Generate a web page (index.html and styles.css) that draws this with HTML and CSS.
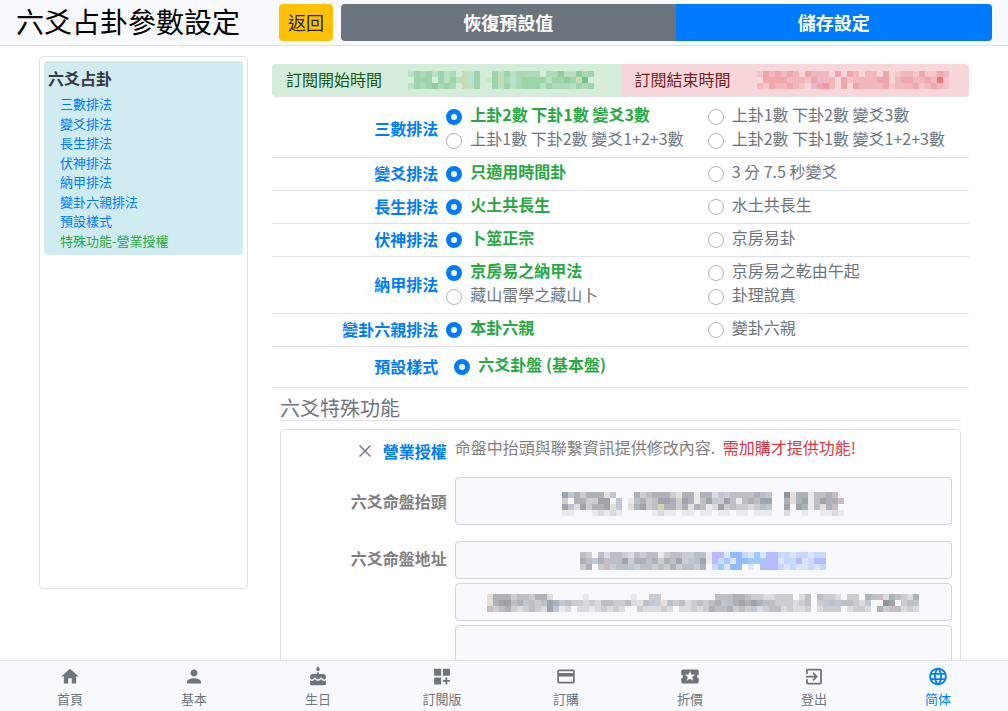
FILE: index.html
```html
<!DOCTYPE html>
<html lang="zh-Hant">
<head>
<meta charset="utf-8">
<meta name="viewport" content="width=device-width, initial-scale=1">
<title>六爻占卦參數設定</title>
<link rel="stylesheet" href="styles.css">
</head>
<body>
<header class="topbar">
  <h1 class="topbar-title">六爻占卦參數設定</h1>
  <button type="button" class="btn btn-back">返回</button>
  <div class="btn-group">
    <button type="button" class="btn btn-reset">恢復預設值</button>
    <button type="button" class="btn btn-save">儲存設定</button>
  </div>
</header>

<div class="page">
  <aside class="side">
    <nav class="side-nav" aria-label="六爻占卦">
      <h2 class="side-title">六爻占卦</h2>
      <a class="side-link" href="#r1">三數排法</a>
      <a class="side-link" href="#r2">變爻排法</a>
      <a class="side-link" href="#r3">長生排法</a>
      <a class="side-link" href="#r4">伏神排法</a>
      <a class="side-link" href="#r5">納甲排法</a>
      <a class="side-link" href="#r6">變卦六親排法</a>
      <a class="side-link" href="#r7">預設樣式</a>
      <a class="side-link side-link-green" href="#special">特殊功能-營業授權</a>
    </nav>
  </aside>

  <main class="main">
    <div class="period">
      <div class="period-cell period-start"><span>訂閱開始時間</span><svg class="mosaic" data-mosaic="start"></svg></div>
      <div class="period-cell period-end"><span>訂閱結束時間</span><svg class="mosaic" data-mosaic="end"></svg></div>
    </div>

    <div class="row row-first" id="r1" role="radiogroup" aria-labelledby="l1">
      <span class="row-label" id="l1">三數排法</span>
      <div class="options">
        <label class="option"><input type="radio" name="g1" checked><span>上卦2數 下卦1數 變爻3數</span></label>
        <label class="option"><input type="radio" name="g1"><span>上卦1數 下卦2數 變爻1+2+3數</span></label>
      </div>
      <div class="options">
        <label class="option"><input type="radio" name="g1"><span>上卦1數 下卦2數 變爻3數</span></label>
        <label class="option"><input type="radio" name="g1"><span>上卦2數 下卦1數 變爻1+2+3數</span></label>
      </div>
    </div>
    <div class="row" id="r2" role="radiogroup" aria-labelledby="l2">
      <span class="row-label" id="l2">變爻排法</span>
      <div class="options"><label class="option"><input type="radio" name="g2" checked><span>只適用時間卦</span></label></div>
      <div class="options"><label class="option"><input type="radio" name="g2"><span>3 分 7.5 秒變爻</span></label></div>
    </div>
    <div class="row" id="r3" role="radiogroup" aria-labelledby="l3">
      <span class="row-label" id="l3">長生排法</span>
      <div class="options"><label class="option"><input type="radio" name="g3" checked><span>火土共長生</span></label></div>
      <div class="options"><label class="option"><input type="radio" name="g3"><span>水土共長生</span></label></div>
    </div>
    <div class="row" id="r4" role="radiogroup" aria-labelledby="l4">
      <span class="row-label" id="l4">伏神排法</span>
      <div class="options"><label class="option"><input type="radio" name="g4" checked><span>卜筮正宗</span></label></div>
      <div class="options"><label class="option"><input type="radio" name="g4"><span>京房易卦</span></label></div>
    </div>
    <div class="row" id="r5" role="radiogroup" aria-labelledby="l5">
      <span class="row-label" id="l5">納甲排法</span>
      <div class="options">
        <label class="option"><input type="radio" name="g5" checked><span>京房易之納甲法</span></label>
        <label class="option"><input type="radio" name="g5"><span>藏山雷學之藏山卜</span></label>
      </div>
      <div class="options">
        <label class="option"><input type="radio" name="g5"><span>京房易之乾由午起</span></label>
        <label class="option"><input type="radio" name="g5"><span>卦理說真</span></label>
      </div>
    </div>
    <div class="row" id="r6" role="radiogroup" aria-labelledby="l6">
      <span class="row-label" id="l6">變卦六親排法</span>
      <div class="options"><label class="option"><input type="radio" name="g6" checked><span>本卦六親</span></label></div>
      <div class="options"><label class="option"><input type="radio" name="g6"><span>變卦六親</span></label></div>
    </div>
    <div class="row row-style" id="r7" role="radiogroup" aria-labelledby="l7">
      <span class="row-label" id="l7">預設樣式</span>
      <div class="options"><label class="option"><input type="radio" name="g7" checked><span>六爻卦盤 (基本盤)</span></label></div>
    </div>

    <section class="special" id="special">
      <h2 class="special-title">六爻特殊功能</h2>
      <div class="card">
        <div class="card-row card-row-license">
          <div class="license-label">
            <svg class="cross" viewBox="0 0 16 16" aria-hidden="true"><path d="M2.500 2.500 13.500 13.500M13.500 2.500 2.500 13.500"/></svg>
            <strong>營業授權</strong>
          </div>
          <p class="license-note">命盤中抬頭與聯繫資訊提供修改內容. <span class="warn">需加購才提供功能!</span></p>
        </div>
        <div class="card-row card-row-head">
          <span class="field-label">六爻命盤抬頭</span>
          <div class="field field-tall"><svg class="mosaic" data-mosaic="head"></svg></div>
        </div>
        <div class="card-row">
          <span class="field-label field-label-top">六爻命盤地址</span>
          <div class="field-stack">
            <div class="field"><svg class="mosaic" data-mosaic="address"></svg></div>
            <div class="field"><svg class="mosaic" data-mosaic="contact"></svg></div>
            <div class="field"></div>
          </div>
        </div>
      </div>
    </section>
  </main>
</div>

<nav class="tabbar" aria-label="主選單">
  <a class="tab" href="#home"><svg viewBox="0 0 24 24" aria-hidden="true"><path d="M10 20v-6h4v6h5v-8h3L12 3 2 12h3v8z"/></svg><span>首頁</span></a>
  <a class="tab" href="#basic"><svg viewBox="0 0 24 24" aria-hidden="true"><path d="M12 12c2.210 0 4-1.790 4-4s-1.790-4-4-4-4 1.790-4 4 1.790 4 4 4zm0 2c-2.670 0-8 1.340-8 4v2h16v-2c0-2.660-5.330-4-8-4z"/></svg><span>基本</span></a>
  <a class="tab" href="#birthday"><svg viewBox="0 0 24 24" aria-hidden="true"><path d="M12 6c1.110 0 2-.9 2-2 0-.38-.1-.73-.29-1.030L12 0l-1.710 2.970c-.19.3-.29.65-.29 1.030 0 1.100.9 2 2 2zm4.600 9.990l-1.070-1.070-1.080 1.070c-1.300 1.300-3.580 1.310-4.890 0l-1.070-1.070-1.090 1.070C6.750 16.640 5.880 17 4.960 17c-.73 0-1.400-.23-1.960-.61V21c0 .55.45 1 1 1h16c.55 0 1-.45 1-1v-4.610c-.56.38-1.230.61-1.960.61-.92 0-1.790-.36-2.440-1.010zM18 9h-5V7h-2v2H6c-1.660 0-3 1.340-3 3v1.540c0 1.080.88 1.960 1.960 1.960.52 0 1.020-.2 1.380-.57l2.140-2.130 2.130 2.130c.74.74 2.030.74 2.770 0l2.140-2.130 2.130 2.130c.37.37.86.57 1.380.57 1.080 0 1.960-.88 1.960-1.960V12C21 10.340 19.660 9 18 9z"/></svg><span>生日</span></a>
  <a class="tab" href="#subscription"><svg viewBox="0 0 24 24" aria-hidden="true"><path d="M3 3h8v8H3zm10 0h8v8h-8zM3 13h8v8H3zm15 0h-2v3h-3v2h3v3h2v-3h3v-2h-3z"/></svg><span>訂閱版</span></a>
  <a class="tab" href="#order"><svg viewBox="0 0 24 24" aria-hidden="true"><path d="M20 4H4c-1.110 0-1.990.89-1.990 2L2 18c0 1.110.89 2 2 2h16c1.110 0 2-.89 2-2V6c0-1.110-.89-2-2-2zm0 14H4v-6h16v6zm0-10H4V6h16v2z"/></svg><span>訂購</span></a>
  <a class="tab" href="#discount"><svg viewBox="0 0 24 24" aria-hidden="true"><path d="M20 12c0-1.100.9-2 2-2V6c0-1.100-.9-2-2-2H4c-1.100 0-1.990.9-1.990 2v4c1.100 0 1.990.9 1.990 2s-.89 2-2 2v4c0 1.100.9 2 2 2h16c1.100 0 2-.9 2-2v-4c-1.100 0-2-.9-2-2zm-4.420 4.800L12 14.500l-3.580 2.300 1.080-4.120-3.290-2.690 4.240-.25L12 5.800l1.540 3.950 4.240.25-3.290 2.690 1.090 4.110z"/></svg><span>折價</span></a>
  <a class="tab" href="#logout"><svg viewBox="0 0 24 24" aria-hidden="true"><path d="M10.090 15.590L11.500 17l5-5-5-5-1.410 1.410L12.670 11H3v2h9.670l-2.580 2.590zM19 3H5c-1.110 0-2 .9-2 2v4h2V5h14v14H5v-4H3v4c0 1.100.89 2 2 2h14c1.100 0 2-.9 2-2V5c0-1.100-.9-2-2-2z"/></svg><span>登出</span></a>
  <a class="tab tab-active" href="#lang" lang="zh-Hans"><svg viewBox="0 0 24 24" aria-hidden="true"><path d="M11.990 2C6.470 2 2 6.480 2 12s4.470 10 9.990 10C17.520 22 22 17.520 22 12S17.520 2 11.990 2zm6.930 6h-2.950c-.32-1.250-.78-2.450-1.380-3.560 1.840.63 3.370 1.910 4.330 3.560zM12 4.040c.83 1.200 1.480 2.530 1.910 3.960h-3.820c.43-1.430 1.080-2.760 1.910-3.960zM4.260 14C4.100 13.360 4 12.690 4 12s.1-1.360.26-2h3.380c-.08.66-.14 1.320-.14 2 0 .68.06 1.340.14 2H4.260zm.82 2h2.950c.32 1.250.78 2.450 1.380 3.560-1.840-.63-3.370-1.900-4.330-3.560zm2.950-8H5.080c.96-1.660 2.490-2.930 4.330-3.560C8.810 5.550 8.350 6.750 8.030 8zM12 19.960c-.83-1.200-1.480-2.530-1.910-3.960h3.820c-.43 1.430-1.080 2.760-1.910 3.960zM14.340 14H9.660c-.09-.66-.16-1.320-.16-2 0-.68.07-1.350.16-2h4.680c.09.65.16 1.320.16 2 0 .68-.07 1.340-.16 2zm.25 5.560c.6-1.110 1.060-2.310 1.380-3.560h2.950c-.96 1.650-2.490 2.930-4.330 3.560zM16.360 14c.08-.66.14-1.320.14-2 0-.68-.06-1.340-.14-2h3.380c.16.64.26 1.310.26 2s-.1 1.360-.26 2h-3.380z"/></svg><span>简体</span></a>
</nav>
<script src="mosaic.js"></script>
</body>
</html>
```
FILE: styles.css
```css
* { box-sizing: border-box; }

body {
  margin: 0;
  background: #fff;
  color: #212529;
  font-family: "Noto Sans CJK TC", "Noto Sans", sans-serif;
  font-size: 16px;
  line-height: 24px;
  overflow: hidden;
}

.topbar {
  position: fixed;
  inset: 0 0 auto;
  z-index: 2;
  display: flex;
  align-items: center;
  height: 46px;
  padding: 0 16px;
  background: #f8f9fa;
  border-bottom: 1px solid #dee2e6;
}
.topbar-title {
  margin: 0 39px 0 0;
  padding-bottom: 4px;
  color: #000;
  font-size: 28px;
  font-weight: 400;
  line-height: 40px;
  white-space: nowrap;
}
.btn {
  height: 37px;
  padding: 0 9px 2px;
  border: 0;
  border-radius: 4px;
  font-family: inherit;
  font-size: 18px;
  line-height: 24px;
  cursor: pointer;
}
.btn-back { margin-right: 8px; background: #ffc107; color: #212529; }
.btn-group { display: flex; flex: 1; }
.btn-reset, .btn-save { flex: 1 1 auto; color: #fff; font-weight: 700; }
.btn-reset { background: #6c757d; border-radius: 4px 0 0 4px; }
.btn-save { background: #007bff; border-radius: 0 4px 4px 0; }

.page {
  display: flex;
  align-items: flex-start;
  gap: 24px;
  max-width: 960px;
  margin: 0 auto;
  padding: 56px 15px 60px;
}

.side {
  flex: 0 0 209px;
  height: 75vh;
  padding: 4px;
  border: 1px solid #dee2e6;
  border-radius: 4px;
}
.side-nav {
  display: flex;
  flex-direction: column;
  padding: 5px 4px;
  background: #d1ecf1;
  border-radius: 4px;
}
.side-title {
  margin: 0 0 4px;
  color: #343a40;
  font-size: 16px;
  font-weight: 700;
  line-height: 24px;
}
.side-link {
  padding-left: 12px;
  color: #007bff;
  font-size: 13px;
  line-height: 1.5;
  text-decoration: none;
}
.side-link-green { color: #28a745; }

.main { flex: 1; min-width: 0; padding-top: 8px; }

.period {
  display: flex;
  border-bottom: 1px solid #dee2e6;
  border-radius: 4px;
  overflow: hidden;
}
.period-cell {
  display: flex;
  flex: 1 1 0;
  align-items: center;
  gap: 26px;
  height: 32px;
  padding-left: 14px;
}
.period-cell span { padding-bottom: 2px; }
.period-start { background: #d4edda; color: #155724; }
.period-end { background: #f8d7da; color: #721c24; }

.mosaic { display: block; flex: none; shape-rendering: crispEdges; }

.row {
  display: grid;
  grid-template-columns: 25% 37.5% 37.5%;
  align-items: center;
  padding: 4px 0;
  border-bottom: 1px solid #dee2e6;
}
.row-first { padding-top: 8px; }
.row-style { padding: 8px 0; }
.row-style .options { padding-left: 8px; }
.row-label {
  padding: 0 8px 2px 0;
  color: #007bff;
  font-weight: 700;
  line-height: 22px;
  text-align: right;
}
.option {
  display: flex;
  align-items: center;
  gap: 8px;
  height: 24px;
  color: #6c757d;
  white-space: nowrap;
}
.option span { padding-bottom: 6px; }
.option input {
  appearance: none;
  flex: none;
  width: 16px;
  height: 16px;
  margin: 0;
  background: #fff;
  border: 1px solid #adb5bd;
  border-radius: 50%;
}
.option input:checked { border: 5px solid #007bff; }
.option input:checked + span { color: #28a745; font-weight: 700; }

.special { padding: 8px; }
.special-title {
  margin: 0 0 8px;
  border-bottom: 1px solid #dee2e6;
  color: #6c757d;
  font-size: 20px;
  font-weight: 400;
  line-height: 24px;
}
.card {
  padding: 5px 8px 8px;
  background: #fefefe;
  border: 1px solid #dee2e6;
  border-radius: 4px;
  color: #808080;
}
.card-row { display: grid; grid-template-columns: 25% 75%; align-items: center; }
.card-row-license { align-items: start; }
.card-row-head { margin: 8px 0 16px; }
.license-label {
  display: flex;
  align-items: center;
  justify-content: flex-end;
  gap: 10px;
  padding: 4px 8px 0 0;
  color: #007bff;
}
.license-label strong { font-weight: 700; }
.cross { width: 16px; height: 16px; fill: none; stroke: #6c757d; stroke-width: 1.4; }
.license-note { margin: 0; padding-bottom: 10px; }
.warn { margin-left: 4px; color: #dc3545; }
.field-label { padding-right: 8px; font-weight: 700; text-align: right; }
.field-label-top { align-self: start; padding-top: 5px; }
.field {
  display: flex;
  align-items: center;
  justify-content: center;
  height: 38px;
  padding-top: 2px;
  background: #f8f9fa;
  border: 1px solid #ced4da;
  border-radius: 4px;
}
.field-tall { height: 48px; padding-top: 6px; }
.field-stack { display: grid; gap: 4px; }

.tabbar {
  position: fixed;
  inset: auto 0 0;
  z-index: 2;
  display: flex;
  height: 51px;
  padding: 0 8px;
  background: #f8f9fa;
  border-top: 1px solid #dee2e6;
}
.tab {
  display: flex;
  flex: 1;
  flex-direction: column;
  align-items: center;
  padding-top: 5px;
  color: #6c757d;
  font-size: 13px;
  line-height: 24px;
  text-decoration: none;
}
.tab svg { width: 24px; height: 24px; fill: currentColor; }
.tab-active { color: #007bff; }
```
FILE: mosaic.js
```javascript
// Masked values: each character is one 6px cell. Digits set the shade of the
// base colour, letters pick a tint, and a dot leaves the cell empty.
var tints = {
  y: '#cfd9b0', t: '#b5e3d4', p: '#e9b8cb', c: '#e6dfd9', r: '#c9bcc2',
  b: '#bcc8d6', w: '#fafaf6', B: '#96baff', V: '#b8bcff', L: '#c7d9fc', K: '#dbe5fc', S: '#a0cafc'
};
var mosaics = {
  start: { color: '#4aae64', rows: [
    '24342423.yt4..42423333.33522534',
    '.444.4242yt4.14y3t3444424454y7.',
    '24345343.y24..42423444243332434'
  ] },
  end: { color: '#dc3545', rows: [
    '1323232.3p22.3.32.22.3.122131132',
    '.333322213p22.31222233.233223261',
    '21322321.p342.3.3222231222312321'
  ] },
  head: { color: '#626b75', rows: [
    '6b53555cb.'  + '..' + '5345553c551552b3444454b' + '..' + '7c551445r.',
    '3w553366wb'  + '.1' + '4534665365146b364145466' + '..' + '5c5614655r',
    '6b263556cb'  + '.c' + '5634y5535c541263433234b' + '..' + '6.6514c5r.',
    '11...12121'  + '..' + '...1211.11.11.11.11.111' + '..' + '2..1..1121'
  ] },
  address: { color: '#626b75', rows: [
    '43.4244324344134433441VVKBBLKSKVVLLKLLKLLKK',
    '54b5r4463554535463b461VLSKBBSSSVVKLLVKLVVKK',
    '35.3r344b344343534435.LSKBB.K.VVVLKLKKLKLLK'
  ].map(function (row) { return row.slice(0, 41); }) },
  contact: { color: '#626b75', rows: [
    'c5553443552.....1.......1..33.........4445543322333.24.4332.33.54r254325',
    'c56645b43465b433232443342c4b3c434234345b45656544333234.3b4b4432b.w76w34b',
    'r3453234326b12.22123232..322232.223235445343b23r423223.2333.2332.53r4232'
  ] }
};

document.querySelectorAll('[data-mosaic]').forEach(function (svg) {
  var data = mosaics[svg.dataset.mosaic];
  var cell = 6;
  svg.setAttribute('width', data.rows[0].length * cell);
  svg.setAttribute('height', data.rows.length * cell);
  svg.setAttribute('aria-hidden', 'true');
  data.rows.forEach(function (row, y) {
    row.split('').forEach(function (code, x) {
      if (code === '.') return;
      var rect = document.createElementNS('http://www.w3.org/2000/svg', 'rect');
      rect.setAttribute('x', x * cell);
      rect.setAttribute('y', y * cell);
      rect.setAttribute('width', cell);
      rect.setAttribute('height', cell);
      rect.setAttribute('fill', tints[code] || data.color);
      if (!tints[code]) rect.setAttribute('fill-opacity', code / 10);
      svg.appendChild(rect);
    });
  });
});
```
